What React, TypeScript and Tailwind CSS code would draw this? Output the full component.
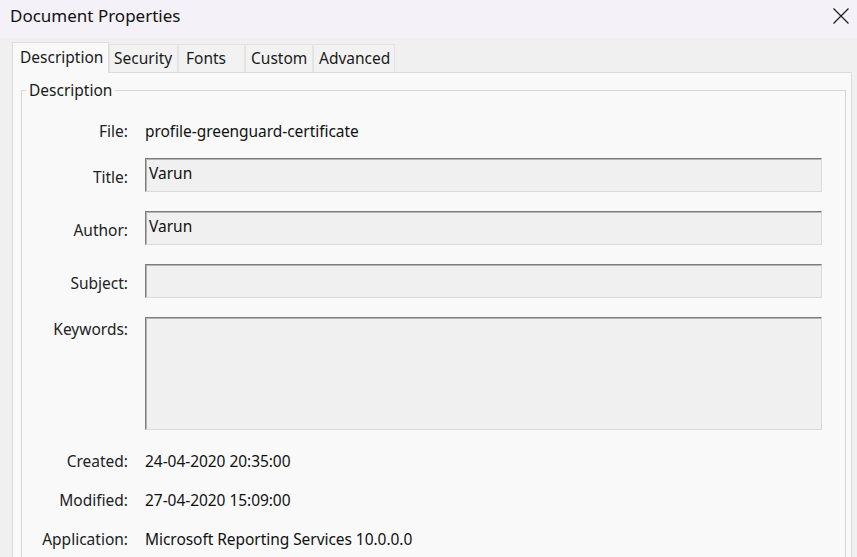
import React from "react";

const font = { fontFamily: '"Noto Sans", "Segoe UI", sans-serif' };

function Tab({ label, active, w, pl }: { label: string; active?: boolean; w: string; pl: string }) {
  if (active) {
    return (
      <div className={`${w} ${pl} h-[31px] -mb-px flex items-center border border-b-0 border-[#dcdcdc] bg-[#f9f9f9] text-[15.5px] text-[#1a1a1a] relative z-10`}>
        {label}
      </div>
    );
  }
  return (
    <div className={`${w} ${pl} h-[28px] flex items-center border border-b-0 border-[#e4e4e4] bg-[#f2f2f2] text-[15.5px] text-[#1a1a1a] pt-[1px]`}>
      {label}
    </div>
  );
}

function Field({ label, height, labelPt, value }: { label: string; height: string; labelPt: string; value?: string }) {
  return (
    <div className="flex items-start">
      <div className={`w-[106px] text-right text-[15.5px] leading-[22px] text-[#222] ${labelPt}`}>{label}</div>
      <div
        className={`ml-[17px] flex-1 ${height} border border-t-[#7c7c7c] border-l-[#7c7c7c] border-r-[#dadada] border-b-[#dadada] bg-[#f0f0f0] shadow-[inset_1px_1px_0_#b4b4b4] pl-[3px] pt-[3px] text-[15.5px] leading-[22px] text-[#111]`}
      >
        {value}
      </div>
    </div>
  );
}

function Info({ label, value }: { label: string; value: string }) {
  return (
    <div className="flex items-center h-[22px]">
      <div className="w-[106px] text-right text-[15.5px] leading-[22px] text-[#222]">{label}</div>
      <div className="ml-[17px] text-[15.5px] leading-[22px] text-[#111] tracking-[-0.05px]">{value}</div>
    </div>
  );
}

export default function App() {
  return (
    <div className="w-[857px] h-[557px] overflow-hidden bg-[#f0f0f0] flex flex-col" style={font}>
      <div className="h-[38px] shrink-0 bg-[#f4f1f8] flex items-center justify-between pl-[10px] pr-[8px]">
        <span className="text-[17px] text-[#111] -mt-[6px]">Document Properties</span>
        <svg width="16" height="16" viewBox="0 0 16 16" className="-mt-[6px]">
          <path d="M0.5 0.5 L15.5 15.5 M15.5 0.5 L0.5 15.5" stroke="#1a1a1a" strokeWidth="1.2" fill="none" />
        </svg>
      </div>
      <div className="h-[34px] shrink-0 flex items-end pl-[12px]">
        <Tab label="Description" active w="w-[97px]" pl="pl-[7px]" />
        <Tab label="Security" w="w-[69px]" pl="pl-[4px]" />
        <Tab label="Fonts" w="w-[67px]" pl="pl-[7px]" />
        <Tab label="Custom" w="w-[68px]" pl="pl-[5px]" />
        <Tab label="Advanced" w="w-[82px]" pl="pl-[5px]" />
      </div>
      <div className="flex-1 ml-[12px] w-[840px] border border-[#dcdcdc] bg-[#f9f9f9] pl-[8px] pr-[5px] pt-[6px]">
        <fieldset className="border border-[#d6d6d6] pr-[23px] pb-[40px]">
          <legend className="ml-[4px] px-[3px] text-[15.5px] leading-[22px] text-[#1a1a1a]">Description</legend>
          <div className="flex flex-col pt-[19px]">
            <Info label="File:" value="profile-greenguard-certificate" />
            <div className="h-[16px]" />
            <Field label="Title:" value="Varun" height="h-[34px]" labelPt="pt-[8px]" />
            <div className="h-[19px]" />
            <Field label="Author:" value="Varun" height="h-[34px]" labelPt="pt-[8px]" />
            <div className="h-[19px]" />
            <Field label="Subject:" height="h-[34px]" labelPt="pt-[8px]" />
            <div className="h-[19px]" />
            <Field label="Keywords:" height="h-[113px]" labelPt="pt-[1px]" />
            <div className="h-[20px]" />
            <Info label="Created:" value="24-04-2020 20:35:00" />
            <div className="h-[17px]" />
            <Info label="Modified:" value="27-04-2020 15:09:00" />
            <div className="h-[17px]" />
            <Info label="Application:" value="Microsoft Reporting Services 10.0.0.0" />
          </div>
        </fieldset>
      </div>
    </div>
  );
}
